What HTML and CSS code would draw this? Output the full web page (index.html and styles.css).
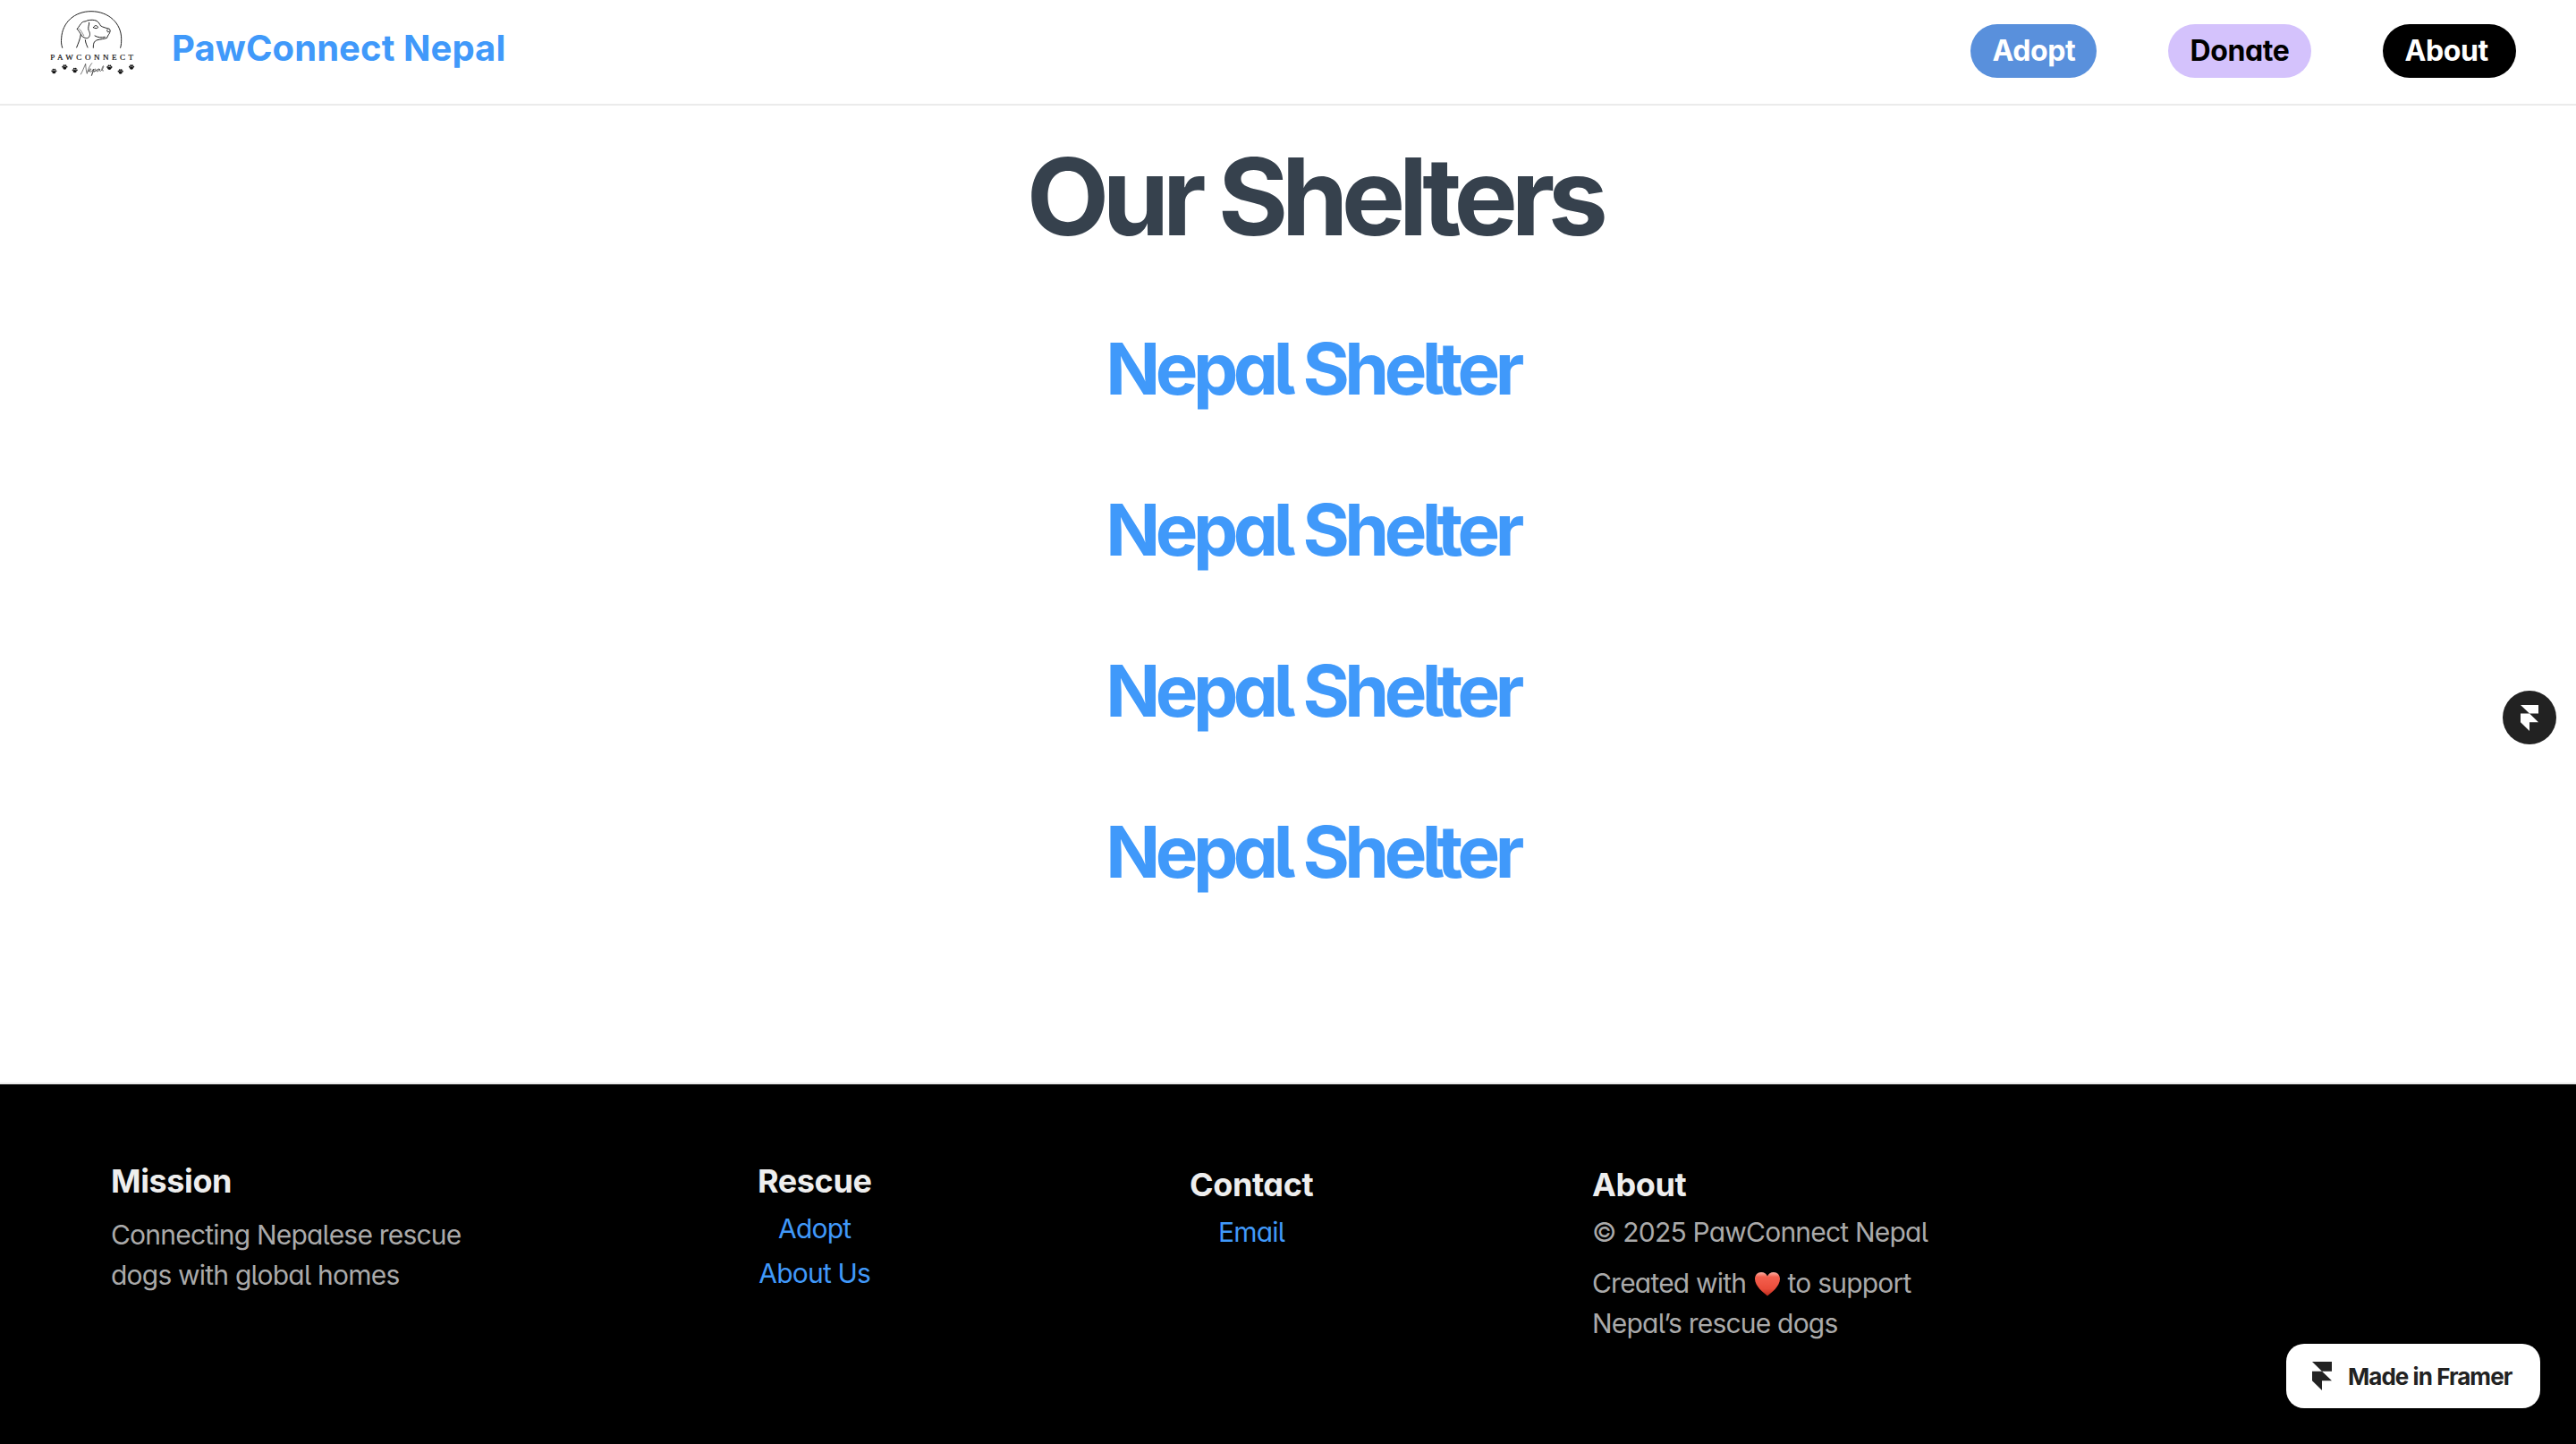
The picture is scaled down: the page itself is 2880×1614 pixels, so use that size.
FILE: index.html
```html
<!DOCTYPE html>
<html lang="en">
<head>
<meta charset="utf-8">
<title>PawConnect Nepal</title>
<link rel="stylesheet" href="styles.css">
</head>
<body>
<header class="site-header">
  <a class="brand">
    <svg class="brand-logo" viewBox="0 0 390 300" fill="none" stroke="#111" stroke-width="2.8" stroke-linecap="round" stroke-linejoin="round">
      <defs>
        <g id="paw" fill="#111" stroke="none">
          <ellipse cx="0" cy="3" rx="6" ry="5"/>
          <circle cx="-6.500" cy="-1" r="2.700"/><circle cx="-2.500" cy="-5.500" r="2.900"/>
          <circle cx="3" cy="-5.500" r="2.900"/><circle cx="6.800" cy="-1" r="2.700"/>
        </g>
      </defs>
      <path d="M89 160C85 147 85 140 86 128C89 75 130 38 186 38C244 38 287 78 287 130C287 142 287 150 284 160"/>
      <path d="M139 97C145 90 149 80 157 74C162 71 168 73 172 69C184 66 196 66 204 70C212 75 215 82 217 86C225 92 238 94 247 97C252 103 248 108 247 112C243 118 240 122 239 127C231 131 217 131 207 134C193 138 193 149 193 160"/>
      <path d="M139 97C143 103 148 108 153 119C160 126 171 132 178 125C184 116 181 108 177 101C174 92 180 83 179 76"/>
      <path d="M151 116C149 131 142 146 137 159M166 134C167 145 171 151 174 159M198 120C208 126 221 127 232 124M240 99C237 106 242 110 246 106M193 92C199 83 205 84 209 92C204 97 198 95 193 92"/>
      <path d="M145 96C153 103 155 110 161 119" stroke-width="1.500"/>
      <text class="logo-name" x="49" y="201" textLength="278">PAWCONNECT</text>
      <path d="M151 249C157 239 163 223 167 214C168 228 169 239 172 247C175 235 180 221 188 212M175 239C184 239 188 231 183 230C177 232 178 244 187 240L194 231C192 241 189 249 187 254C191 239 196 229 201 232C202 238 197 241 194 240C203 239 209 231 212 231C204 232 203 241 208 240L215 231C213 239 216 241 221 235C227 228 229 221 226 221C221 228 219 240 227 237" stroke-width="1.700"/>
      <use href="#paw" x="61" y="239"/><use href="#paw" x="97" y="225"/><use href="#paw" x="131" y="236"/>
      <use href="#paw" x="247" y="226"/><use href="#paw" x="284" y="240"/><use href="#paw" x="321" y="225"/>
    </svg>
    <span class="brand-name">PawConnect Nepal</span>
  </a>
  <nav class="nav">
    <a class="pill pill-adopt">Adopt</a>
    <a class="pill pill-donate">Donate</a>
    <a class="pill pill-about">About</a>
  </nav>
</header>
<main class="shelters">
  <h1 class="page-title">Our Shelters</h1>
  <div class="shelter-list">
    <h2 class="shelter">Nepal Shelter</h2>
    <h2 class="shelter">Nepal Shelter</h2>
    <h2 class="shelter">Nepal Shelter</h2>
    <h2 class="shelter">Nepal Shelter</h2>
  </div>
</main>
<footer class="site-footer">
  <section class="col">
    <h3 class="col-title">Mission</h3>
    <p class="copy copy-mission">Connecting Nepalese rescue<br>dogs with global homes</p>
  </section>
  <section class="col col-centered">
    <h3 class="col-title">Rescue</h3>
    <a class="link">Adopt</a>
    <a class="link">About Us</a>
  </section>
  <section class="col col-centered">
    <h3 class="col-title alt">Contact</h3>
    <a class="link">Email</a>
  </section>
  <section class="col">
    <h3 class="col-title alt">About</h3>
    <p class="copy copy-legal">© 2025 PawConnect Nepal</p>
    <p class="copy copy-credit">Created with <svg class="heart" viewBox="0 0 30 28"><defs><linearGradient id="red" x1="0" y1="0" x2="0" y2="1"><stop offset="0" stop-color="#ffb0a4"/><stop offset=".2" stop-color="#f4604e"/><stop offset=".7" stop-color="#ea4c3a"/><stop offset="1" stop-color="#b92a1c"/></linearGradient></defs><path fill="url(#red)" d="M15 27.500C11 24 1 17 1 8.500C1 4 4 1 8 1C11.500 1 14 3 15 5.500C16 3 18.500 1 22 1C26 1 29 4 29 8.500C29 17 19 24 15 27.500Z"/></svg> to support<br>Nepal’s rescue dogs</p>
  </section>
</footer>
<a class="edit-button" aria-label="Edit">
  <svg class="edit-icon" viewBox="0 0 20 29"><path fill="#fff" d="M0 0H20V9.600H10ZM0 9.600H10L20 19.200H10V29L0 19.200Z"/></svg>
</a>
<a class="badge">
  <svg class="badge-icon" viewBox="0 0 22 32"><path fill="#222" d="M0 0H22V10.700H11ZM0 10.700H11L22 21.300H11V32L0 21.300Z"/></svg>
  <span class="badge-text">Made in Framer</span>
</a>
</body>
</html>
```
FILE: styles.css
```css
* { box-sizing: border-box; margin: 0; padding: 0; }
body {
  width: 2880px;
  height: 1614px;
  overflow: hidden;
  display: flex;
  flex-direction: column;
  background: #fff;
  font-family: Inter, "Liberation Sans", sans-serif;
}
.site-header {
  height: 118px;
  flex: none;
  display: flex;
  justify-content: space-between;
  align-items: flex-start;
  padding: 0 67px 0 40px;
  border-bottom: 2px solid #ebebeb;
}
.brand { display: flex; gap: 22px; }
.brand-logo { width: 130px; height: 100px; display: block; }
.logo-name { font: 27px "Liberation Serif", serif; fill: #111; stroke: #111; stroke-width: 0.6px; }
.brand-name {
  margin-top: 30px;
  line-height: 48px;
  font-size: 40px;
  font-weight: 700;
  letter-spacing: 0.08px;
  color: #4099fa;
}
.nav { display: flex; gap: 80px; padding-top: 27px; }
.pill {
  height: 60px;
  padding-left: 24.5px;
  border-radius: 30px;
  font-size: 32px;
  line-height: 59px;
  font-weight: 700;
  letter-spacing: -0.4px;
  font-feature-settings: "cv11", "cv05";
  color: #fff;
}
.pill-adopt { width: 141px; background: #5990dc; }
.pill-donate { width: 160px; background: #d4c2fc; color: #000; }
.pill-about { width: 149px; background: #000; }
.shelters {
  flex: 1;
  display: flex;
  flex-direction: column;
  align-items: center;
  gap: 72px;
  padding: 30px 0 0 58px;
}
.page-title {
  font-size: 120px;
  line-height: 144px;
  font-weight: 700;
  letter-spacing: -7.6px;
  color: #36414d;
}
.shelter-list {
  display: flex;
  flex-direction: column;
  align-items: center;
  gap: 84px;
  margin-right: 3px;
}
.shelter {
  font-size: 80px;
  line-height: 96px;
  font-weight: 700;
  letter-spacing: -5.5px;
  font-feature-settings: "cv11", "cv05";
  color: #4099fa;
}
.site-footer {
  flex: none;
  height: 404px;
  display: grid;
  grid-template-columns: 723px 483px 450px 1fr;
  justify-items: start;
  padding: 85px 0 0 124px;
  border-top: 2px solid #ebebeb;
  background: #000;
}
.col { display: flex; flex-direction: column; align-items: flex-start; }
.col-centered { align-items: center; }
.col-title {
  margin-bottom: 8px;
  font-size: 36px;
  line-height: 46px;
  font-weight: 700;
  letter-spacing: -0.4px;
  color: #eee;
}
.alt { margin-top: 4px; font-feature-settings: "cv11"; }
.copy, .link {
  font-size: 30px;
  line-height: 45px;
  letter-spacing: -0.79px;
  font-feature-settings: "cv11", "cv05";
  color: #aaa;
}
.copy-mission { margin-top: 7px; }
.copy-legal { margin-bottom: 12px; }
.link { margin-bottom: 5px; color: #4099fa; }
.heart { width: 30px; height: 28px; margin-left: 1px; vertical-align: -4px; }
.edit-button {
  position: absolute;
  left: 2798px;
  top: 772px;
  width: 60px;
  height: 60px;
  display: flex;
  justify-content: center;
  align-items: center;
  border-radius: 50%;
  background: #222;
}
.edit-icon { width: 20px; height: 29px; }
.badge {
  position: absolute;
  left: 2556px;
  top: 1502px;
  width: 284px;
  height: 72px;
  display: flex;
  align-items: center;
  gap: 18px;
  padding-left: 29px;
  border-radius: 20px;
  background: #fff;
}
.badge-icon { width: 22px; height: 32px; }
.badge-text { font-size: 26px; font-weight: 700; letter-spacing: -0.95px; color: #222; }
```
